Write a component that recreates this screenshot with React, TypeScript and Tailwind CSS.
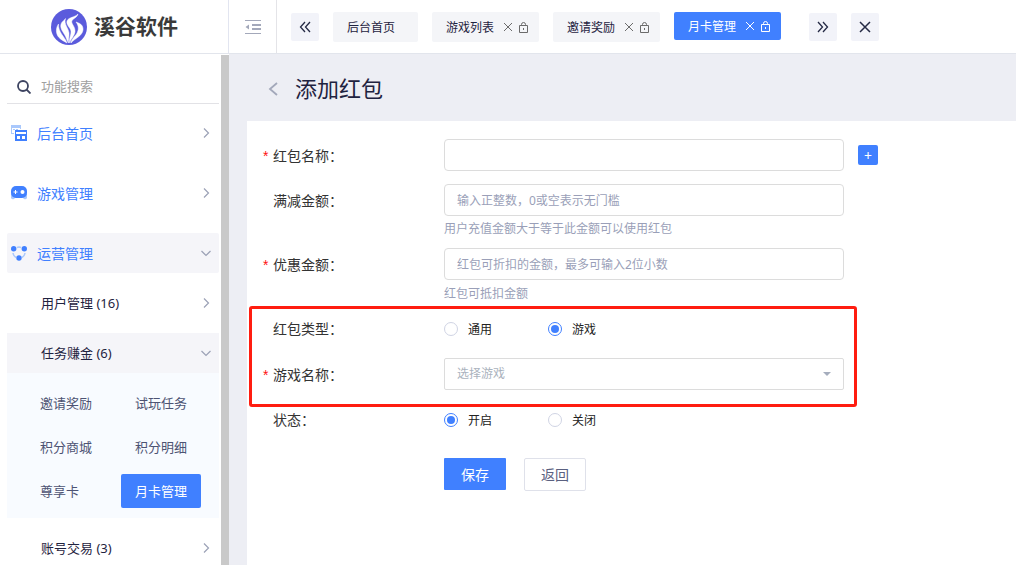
import { useState } from 'react'
import type { ReactNode } from 'react'

const topMenus = [
  { label: '后台首页', icon: 'home' },
  { label: '游戏管理', icon: 'game' },
  { label: '运营管理', icon: 'ops' },
]

const taskLinks = ['邀请奖励', '试玩任务', '积分商城', '积分明细', '尊享卡', '月卡管理']

const tabs = ['后台首页', '游戏列表', '邀请奖励', '月卡管理']

function Logo() {
  return (
    <svg width="36" height="36" viewBox="0 0 36 36" aria-hidden="true">
      <circle cx="18" cy="18" r="18" fill="#5b5bdc" />
      <g fill="#fff" stroke="#fff" strokeWidth="0.5">
        <path d="M27 5C26 8.500 23 9 21 11.500C19.500 15 24.500 17 24 23C23 28 19.500 30 18.800 34C17.500 30 20.500 26 20 22C19 18 15 16 16 12C17.500 8 24 8.500 27 5Z" />
        <path d="M14.500 9.500C12.500 15 17.500 19 18 24C18.300 28 17 31 17.500 34C15.500 31 15.500 28.500 13.500 25.500C11 21.500 8.500 18 10.500 14C11.500 12 13.500 11.500 14.500 9.500Z" />
        <path d="M7.500 15C5 18.500 4.500 24 7.500 28C10 31 13 32 16 34C14.500 30 12.500 28 10.500 25C8.500 21.500 7.300 19 7.500 15Z" />
        <path d="M25 13C28 14 32.500 15.500 32 21C31 27.500 24 29 20 34C20.500 30 23.500 28 25.500 25C28 21 28 17 25 13Z" />
      </g>
    </svg>
  )
}

function MenuIcon({ name }: { name: string }) {
  if (name === 'home') {
    return (
      <svg width="16" height="16" viewBox="0 0 16 16" aria-hidden="true">
        <path d="M0 0H10V4H9V3H1V8H3V9H0Z" fill="#a9c8fc" />
        <path d="M2 4h2v1H2zM5 4h2v1H5z" fill="#a9c8fc" />
        <path d="M4 5H16V16H4ZM5 7V9H15V7ZM6 11V14H9V11ZM11 11V14H14V11Z" fill="#4080ff" fillRule="evenodd" />
      </svg>
    )
  }
  if (name === 'game') {
    return (
      <svg width="16" height="14" viewBox="0 0 16 14" aria-hidden="true">
        <path d="M0 8H16V12Q15 14 13 13L11 11H5L3 13Q1 14 0 12Z" fill="#a9c8fc" />
        <rect width="16" height="12" rx="5" fill="#4080ff" />
        <path d="M4 4h1v1.500h1.500v1H5V8H4V6.500H2.500v-1H4z" fill="#fff" />
        <circle cx="11.500" cy="6" r="2" fill="#fff" />
      </svg>
    )
  }
  return (
    <svg width="16" height="15" viewBox="0 0 16 15" aria-hidden="true">
      <g fill="none" stroke="#a9c8fc" strokeWidth="1.500">
        <path d="M6 1.500Q8 0.500 10 1.500M2 7Q2.500 10 5 11.500M14 7Q13.500 10 11 11.500" />
      </g>
      <g fill="#4080ff">
        <circle cx="2.700" cy="2.700" r="2.700" />
        <circle cx="13.300" cy="2.700" r="2.700" />
        <circle cx="8" cy="12" r="2.700" />
      </g>
    </svg>
  )
}

function Chevron({ open }: { open?: boolean }) {
  return (
    <svg width="10" height="10" viewBox="0 0 10 10" fill="none" stroke="#9ba1b6" strokeWidth="1.200" className="shrink-0" aria-hidden="true">
      <path d={open ? 'M0.500 3L5 7.500L9.500 3' : 'M3 0.500L7.500 5L3 9.500'} />
    </svg>
  )
}

function TabIcons({ label }: { label: string }) {
  return (
    <span className="ml-[9px] flex items-center gap-[5px]">
      <button type="button" aria-label={`关闭${label}`}>
        <svg width="10" height="10" viewBox="0 0 10 10" fill="none" stroke="currentColor">
          <path d="M1 1L9 9M9 1L1 9" />
        </svg>
      </button>
      <button type="button" aria-label={`锁定${label}`}>
        <svg width="11" height="11" viewBox="0 0 11 11" fill="none" stroke="currentColor">
          <path d="M1.500 3.500H9.500V10.500H1.500ZM3.500 3.500V2.500Q3.500 0.500 5.500 0.500T7.500 2.500V3.500M5.500 6V8" />
        </svg>
      </button>
    </span>
  )
}

interface FieldProps {
  label: string
  required?: boolean
  htmlFor: string
  children: ReactNode
}

function Field({ label, required, htmlFor, children }: FieldProps) {
  return (
    <div className="flex items-start">
      <label htmlFor={htmlFor} className="flex h-[34px] w-[181px] shrink-0 items-center text-sm text-[#333]">
        <span className="w-[10px] font-['Liberation_Sans',sans-serif] text-[#ff1010]">{required ? '*' : ''}</span>
        {label}：
      </label>
      {children}
    </div>
  )
}

interface RadioRowProps {
  name: string
  label: string
  options: string[]
  value: string
  onChange: (v: string) => void
}

function RadioRow({ name, label, options, value, onChange }: RadioRowProps) {
  return (
    <div role="radiogroup" aria-labelledby={`${name}-label`} className="flex h-[34px] items-center">
      <span id={`${name}-label`} className="w-[181px] shrink-0 pl-[10px] text-sm text-[#333]">{label}：</span>
      {options.map(o => (
        <label key={o} className="flex w-[104px] items-center gap-[10px] text-xs text-[#222]">
          <input
            type="radio"
            name={name}
            checked={value === o}
            onChange={() => onChange(o)}
            className="size-[14px] appearance-none rounded-full border border-[#d0d4e4] bg-clip-content p-[2px] checked:border-[#4080ff] checked:bg-[#4080ff]"
          />
          <span className="pt-[2px]">{o}</span>
        </label>
      ))}
    </div>
  )
}

const inputClass = 'h-8 w-full rounded border border-[#dcdcdc] bg-white px-3 text-xs outline-none placeholder:text-[#9a9fb8]'

function Sidebar() {
  return (
    <aside className="flex w-[229px] shrink-0">
      <nav className="min-w-0 flex-1 overflow-hidden pr-[2px] pl-[7px]">
        <label className="flex h-[50px] items-center border-b border-[#e2e2e6] pt-4 pl-[10px]">
          <svg width="14" height="14" viewBox="0 0 14 14" fill="none" stroke="#3d4461" strokeWidth="1.800" className="shrink-0" aria-hidden="true">
            <circle cx="6" cy="6" r="5" />
            <path d="M9.500 9.500L13.500 13.500" />
          </svg>
          <input type="search" aria-label="功能搜索" placeholder="功能搜索" className="ml-[10px] w-full text-[13px] outline-none placeholder:text-[#a0a0a0]" />
        </label>
        <div className="mt-[9px] flex flex-col gap-5">
          {topMenus.map(m => (
            <a
              key={m.label}
              href="#"
              className={`flex h-10 items-center rounded-xs pr-2 pl-1 text-sm text-[#4080ff] ${m.icon === 'ops' ? 'bg-[#f5f5f9]' : ''}`}
            >
              <MenuIcon name={m.icon} />
              <span className="ml-[10px] flex-1 pt-[2px]">{m.label}</span>
              <Chevron open={m.icon === 'ops'} />
            </a>
          ))}
        </div>
        <div className="mt-[10px] flex flex-col text-[13px] text-[#1f2340]">
          <a href="#" className="mb-[10px] flex h-10 items-center justify-between pr-2 pl-[34px]">
            <span className="pt-[2px]">用户管理 (16)</span>
            <Chevron />
          </a>
          <a href="#" className="flex h-10 items-center justify-between bg-[#f5f5f9] pr-2 pl-[34px]">
            <span className="pt-[2px]">任务赚金 (6)</span>
            <Chevron open />
          </a>
          <div className="grid grid-cols-[80px_80px] gap-x-[15px] gap-y-[10px] bg-[#f8fbff] pt-[13px] pb-[10px] pl-[19px]">
            {taskLinks.map(t => (
              <a
                key={t}
                href="#"
                className={`flex h-[34px] items-center rounded-xs pt-[2px] pl-[14px] ${t === '月卡管理' ? 'bg-[#4080ff] text-white' : 'text-[#4d5373]'}`}
              >
                {t}
              </a>
            ))}
          </div>
          <a href="#" className="mt-[10px] flex h-10 items-center justify-between pr-2 pl-[34px]">
            <span className="pt-[2px]">账号交易 (3)</span>
            <Chevron />
          </a>
        </div>
      </nav>
      <div className="mt-px w-2 bg-[#c9c9c9]" />
    </aside>
  )
}

function Header() {
  const iconButton = 'mt-px flex size-7 items-center justify-center rounded-xs bg-[#f2f3f9] text-[#252a45]'
  return (
    <header className="flex h-[54px] shrink-0 border-b border-[#e2e5ec] bg-white">
      <div className="flex w-[229px] shrink-0 items-center border-r border-[#e2e5f0] pl-[51px]">
        <Logo />
        <span className="ml-[7px] text-[21px] font-bold text-[#3a3a3a]">溪谷软件</span>
      </div>
      <button type="button" aria-label="收起菜单" className="flex w-12 shrink-0 items-center justify-center border-r border-[#e4e4e8]">
        <svg width="16" height="14" viewBox="0 0 16 14" fill="#a3a8ba">
          <path d="M0 0H16V1H0ZM7 4H16V6H7ZM7 8H16V10H7ZM0 13H16V14H0ZM4 4.500V9.500L0.500 7Z" />
        </svg>
      </button>
      <div className="flex items-start gap-[14px] pt-3 pl-[14px] text-xs">
        <button type="button" aria-label="向左" className={iconButton}>
          <svg width="12" height="12" viewBox="0 0 12 12" fill="none" stroke="currentColor" strokeWidth="1.300">
            <path d="M6 1L1.500 6L6 11M11 1L6.500 6L11 11" />
          </svg>
        </button>
        {tabs.map((t, i) => (
          <div
            key={t}
            className={`flex items-center rounded-xs pl-[14px] ${i === 3 ? 'h-7 bg-[#4080ff] text-white' : 'h-[30px] bg-[#f4f5f8] text-[#6b6b6b]'} ${i === 0 ? 'pr-[23px]' : 'pr-[10px]'}`}
          >
            <a href="#" className={`pt-[2px] ${i === 3 ? 'text-white' : 'text-[#1f2340]'}`}>{t}</a>
            {i > 0 && <TabIcons label={t} />}
          </div>
        ))}
        <button type="button" aria-label="向右" className={`${iconButton} ml-[14px]`}>
          <svg width="12" height="12" viewBox="0 0 12 12" fill="none" stroke="currentColor" strokeWidth="1.300">
            <path d="M1 1L5.500 6L1 11M6 1L10.500 6L6 11" />
          </svg>
        </button>
        <button type="button" aria-label="关闭全部" className={iconButton}>
          <svg width="12" height="12" viewBox="0 0 12 12" fill="none" stroke="currentColor" strokeWidth="1.500">
            <path d="M1 1L11 11M11 1L1 11" />
          </svg>
        </button>
      </div>
    </header>
  )
}

export default function App() {
  const [kind, setKind] = useState('游戏')
  const [status, setStatus] = useState('开启')

  return (
    <div className="flex h-screen flex-col overflow-hidden bg-white font-['Noto_Sans','Noto_Sans_CJK_SC',sans-serif]">
      <Header />
      <div className="flex min-h-0 flex-1">
        <Sidebar />
        <main className="flex min-w-0 flex-1 flex-col bg-[#edeef4] pl-[18px]">
          <div className="flex h-[67px] shrink-0 items-center pt-[2px] pl-[21px]">
            <a href="#" aria-label="返回">
              <svg width="10" height="14" viewBox="0 0 10 14" fill="none" stroke="#a3a8ba" strokeWidth="1.800">
                <path d="M9 1L2 7L9 13" />
              </svg>
            </a>
            <h1 className="ml-[17px] text-[22px] text-[#1f2340]">添加红包</h1>
          </div>
          <form className="flex-1 bg-white px-4 pt-[18px]" onSubmit={e => e.preventDefault()}>
            <Field label="红包名称" required htmlFor="name">
              <div className="flex w-full max-w-[434px] items-center gap-[14px]">
                <input id="name" type="text" className={inputClass} />
                <button type="button" aria-label="添加" className="flex size-5 shrink-0 items-center justify-center rounded-xs bg-[#4080ff] pt-[2px] text-sm text-white">
                  +
                </button>
              </div>
            </Field>
            <div className="mt-[11px]">
              <Field label="满减金额" htmlFor="threshold">
                <div className="w-full max-w-[400px]">
                  <input id="threshold" type="text" placeholder="输入正整数，0或空表示无门槛" className={inputClass} />
                  <p className="pt-[3px] text-xs leading-5 text-[#9a9fb8]">用户充值金额大于等于此金额可以使用红包</p>
                </div>
              </Field>
            </div>
            <div className="mt-[9px]">
              <Field label="优惠金额" required htmlFor="amount">
                <div className="w-full max-w-[400px]">
                  <input id="amount" type="text" placeholder="红包可折扣的金额，最多可输入2位小数" className={inputClass} />
                  <p className="pt-1 text-xs leading-5 text-[#9a9fb8]">红包可抵扣金额</p>
                </div>
              </Field>
            </div>
            <div className="relative mt-2 max-w-[581px]">
              <div className="pointer-events-none absolute -top-[6px] -right-[13px] -bottom-[15px] -left-[14px] rounded-[3px] border-3 border-[#ff1d10]" />
              <RadioRow name="kind" label="红包类型" options={['通用', '游戏']} value={kind} onChange={setKind} />
              <div className="mt-3">
                <Field label="游戏名称" required htmlFor="game">
                  <div className="relative w-full">
                    <select id="game" className="h-8 w-full appearance-none rounded-xs border border-[#dcdcdc] bg-white px-3 text-xs text-[#aab2bd] outline-none">
                      <option>选择游戏</option>
                    </select>
                    <svg width="8" height="4" viewBox="0 0 8 4" className="pointer-events-none absolute top-[14px] right-[13px]" fill="#a5adbd">
                      <path d="M0 0H8L4 4Z" />
                    </svg>
                  </div>
                </Field>
              </div>
            </div>
            <div className="mt-[11px]">
              <RadioRow name="status" label="状态" options={['开启', '关闭']} value={status} onChange={setStatus} />
            </div>
            <div className="mt-[21px] flex items-start gap-[18px] pl-[181px] text-sm">
              <button type="submit" className="h-8 w-[62px] rounded-[1px] bg-[#4080ff] pt-[2px] text-white">保存</button>
              <button type="button" className="h-[33px] w-[62px] rounded-xs border border-[#dfe1ea] bg-white text-[#5a6080]">返回</button>
            </div>
          </form>
        </main>
      </div>
    </div>
  )
}
